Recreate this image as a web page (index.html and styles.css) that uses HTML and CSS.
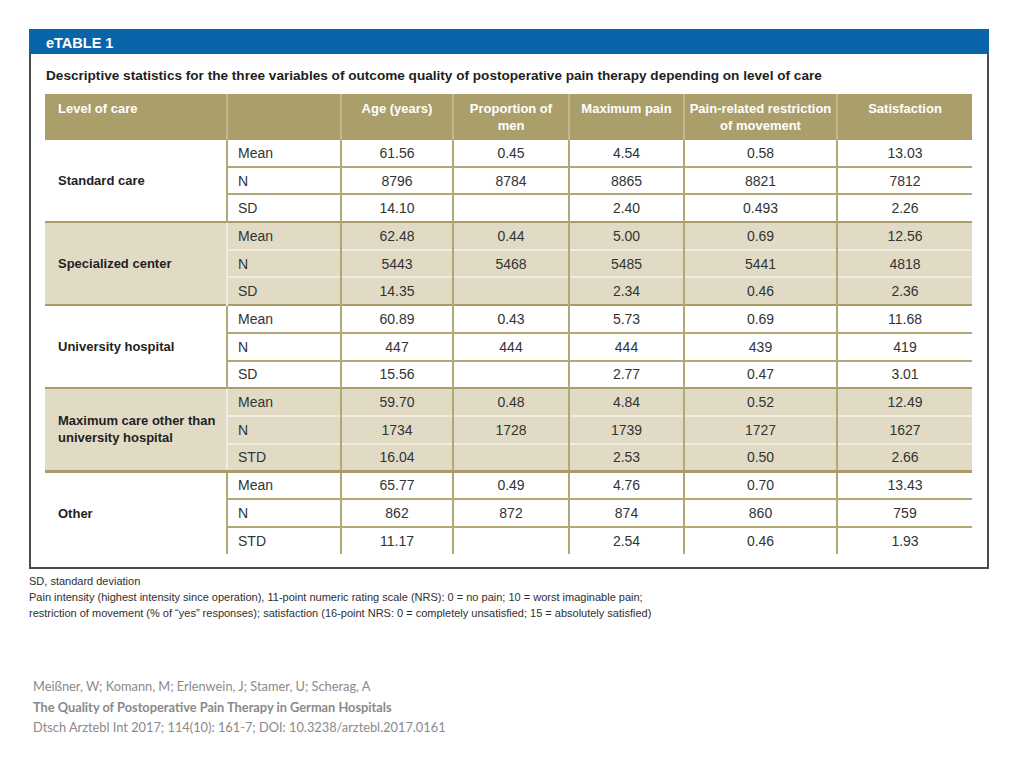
FILE: index.html
```html
<!DOCTYPE html>
<html>
<head>
<meta charset="utf-8">
<link rel="stylesheet" href="styles.css">
</head>
<body>
<div class="page">
  <div class="frame">
    <div class="bar">eTABLE 1</div>
    <div class="caption">Descriptive statistics for the three variables of outcome quality of postoperative pain therapy depending on level of care</div>
    <table class="data">
      <colgroup>
        <col class="c1"><col class="c2"><col class="c3"><col class="c4"><col class="c5"><col class="c6"><col class="c7">
      </colgroup>
      <thead>
        <tr>
          <th class="lvl">Level of care</th>
          <th></th>
          <th>Age (years)</th>
          <th>Proportion of<br>men</th>
          <th>Maximum pain</th>
          <th>Pain-related restriction<br>of movement</th>
          <th>Satisfaction</th>
        </tr>
      </thead>
      <tbody class="grp">
        <tr><td class="name" rowspan="3">Standard care</td><td class="stat">Mean</td><td>61.56</td><td>0.45</td><td>4.54</td><td>0.58</td><td>13.03</td></tr>
        <tr><td class="stat">N</td><td>8796</td><td>8784</td><td>8865</td><td>8821</td><td>7812</td></tr>
        <tr><td class="stat">SD</td><td>14.10</td><td></td><td>2.40</td><td>0.493</td><td>2.26</td></tr>
      </tbody>
      <tbody class="grp shade">
        <tr><td class="name" rowspan="3">Specialized center</td><td class="stat">Mean</td><td>62.48</td><td>0.44</td><td>5.00</td><td>0.69</td><td>12.56</td></tr>
        <tr><td class="stat">N</td><td>5443</td><td>5468</td><td>5485</td><td>5441</td><td>4818</td></tr>
        <tr><td class="stat">SD</td><td>14.35</td><td></td><td>2.34</td><td>0.46</td><td>2.36</td></tr>
      </tbody>
      <tbody class="grp">
        <tr><td class="name" rowspan="3">University hospital</td><td class="stat">Mean</td><td>60.89</td><td>0.43</td><td>5.73</td><td>0.69</td><td>11.68</td></tr>
        <tr><td class="stat">N</td><td>447</td><td>444</td><td>444</td><td>439</td><td>419</td></tr>
        <tr><td class="stat">SD</td><td>15.56</td><td></td><td>2.77</td><td>0.47</td><td>3.01</td></tr>
      </tbody>
      <tbody class="grp shade">
        <tr><td class="name" rowspan="3">Maximum care other than<br>university hospital</td><td class="stat">Mean</td><td>59.70</td><td>0.48</td><td>4.84</td><td>0.52</td><td>12.49</td></tr>
        <tr><td class="stat">N</td><td>1734</td><td>1728</td><td>1739</td><td>1727</td><td>1627</td></tr>
        <tr><td class="stat">STD</td><td>16.04</td><td></td><td>2.53</td><td>0.50</td><td>2.66</td></tr>
      </tbody>
      <tbody class="grp last">
        <tr><td class="name" rowspan="3">Other</td><td class="stat">Mean</td><td>65.77</td><td>0.49</td><td>4.76</td><td>0.70</td><td>13.43</td></tr>
        <tr><td class="stat">N</td><td>862</td><td>872</td><td>874</td><td>860</td><td>759</td></tr>
        <tr><td class="stat">STD</td><td>11.17</td><td></td><td>2.54</td><td>0.46</td><td>1.93</td></tr>
      </tbody>
    </table>
  </div>
  <div class="notes">
    <p>SD, standard deviation</p>
    <p>Pain intensity (highest intensity since operation), 11-point numeric rating scale (NRS): 0 = no pain; 10 = worst imaginable pain;</p>
    <p>restriction of movement (% of “yes” responses); satisfaction (16-point NRS: 0 = completely unsatisfied; 15 = absolutely satisfied)</p>
  </div>
  <div class="cite">
    <p>Meißner, W; Komann, M; Erlenwein, J; Stamer, U; Scherag, A</p>
    <p class="title">The Quality of Postoperative Pain Therapy in German Hospitals</p>
    <p>Dtsch Arztebl Int 2017; 114(10): 161-7; DOI: 10.3238/arztebl.2017.0161</p>
  </div>
</div>
</body>
</html>
```

FILE: styles.css
```css
html, body {
  margin: 0;
  padding: 0;
  background: #ffffff;
}

.page {
  padding: 29px 0 0 29px;
  font-family: "Liberation Sans", Arial, sans-serif;
  color: #2b2b2b;
}

.frame {
  box-sizing: border-box;
  width: 960px;
  border-left: 2px solid #4d4d4d;
  border-right: 2px solid #4d4d4d;
  border-bottom: 2px solid #4d4d4d;
  padding-bottom: 13px;
}

.bar {
  height: 25px;
  margin: 0 -2px;
  padding-left: 17px;
  background: #0865a9;
  color: #ffffff;
  font-weight: bold;
  font-size: 14.5px;
  line-height: 29px;
}

.caption {
  padding: 10px 0 0 15px;
  height: 30px;
  box-sizing: border-box;
  font-weight: bold;
  font-size: 13.6px;
  line-height: 23px;
  color: #1e1e1e;
  white-space: nowrap;
}

.data {
  margin: 10px 0 0 14px;
  border-collapse: collapse;
  table-layout: fixed;
  width: 927px;
  font-size: 14px;
}

.c1 { width: 182px; }
.c2 { width: 114px; }
.c3 { width: 112px; }
.c4 { width: 116px; }
.c5 { width: 115px; }
.c6 { width: 153px; }
.c7 { width: 135px; }

.data th {
  height: 45px;
  box-sizing: border-box;
  background: #aa9e6b;
  color: #ffffff;
  font-weight: bold;
  font-size: 13px;
  vertical-align: top;
  text-align: center;
  padding: 6px 0 0;
  line-height: 17px;
  white-space: nowrap;
  border-left: 2px solid #c1b78e;
}

.data th:first-child { border-left: none; }

.data th.lvl {
  text-align: left;
  padding-left: 13px;
}

.data td {
  height: 27.7px;
  padding: 0;
  box-sizing: border-box;
  text-align: center;
  border-left: 2px solid #b3a774;
  border-top: 2px solid #b3a774;
  color: #333333;
  line-height: 16px;
}

.data td.stat {
  text-align: left;
  padding-left: 10px;
}

.data td.name {
  border-left: none;
  text-align: left;
  padding-left: 13px;
  font-weight: bold;
  font-size: 13px;
  line-height: 17px;
  white-space: nowrap;
  color: #1f1f1f;
}

.data tbody.grp tr:first-child td {
  border-top: 2px solid #a99c69;
}

.shade td {
  background: #e1dbc6;
  border-top-color: #f1ece0;
}

.shade td.stat {
  border-left-color: #f1ece0;
}

.data tbody.last tr:first-child td {
  border-top: 3px solid #a99c69;
}

.notes {
  padding-top: 4px;
  font-size: 11px;
  line-height: 16px;
  color: #2e2e2e;
}

.notes p, .cite p {
  margin: 0;
}

.cite {
  margin-top: 55px;
  padding-left: 4px;
  font-family: Lato, "Open Sans", sans-serif;
  font-size: 12.8px;
  line-height: 20.5px;
  color: #8a8a8a;
}

.cite .title {
  font-weight: bold;
}
```
